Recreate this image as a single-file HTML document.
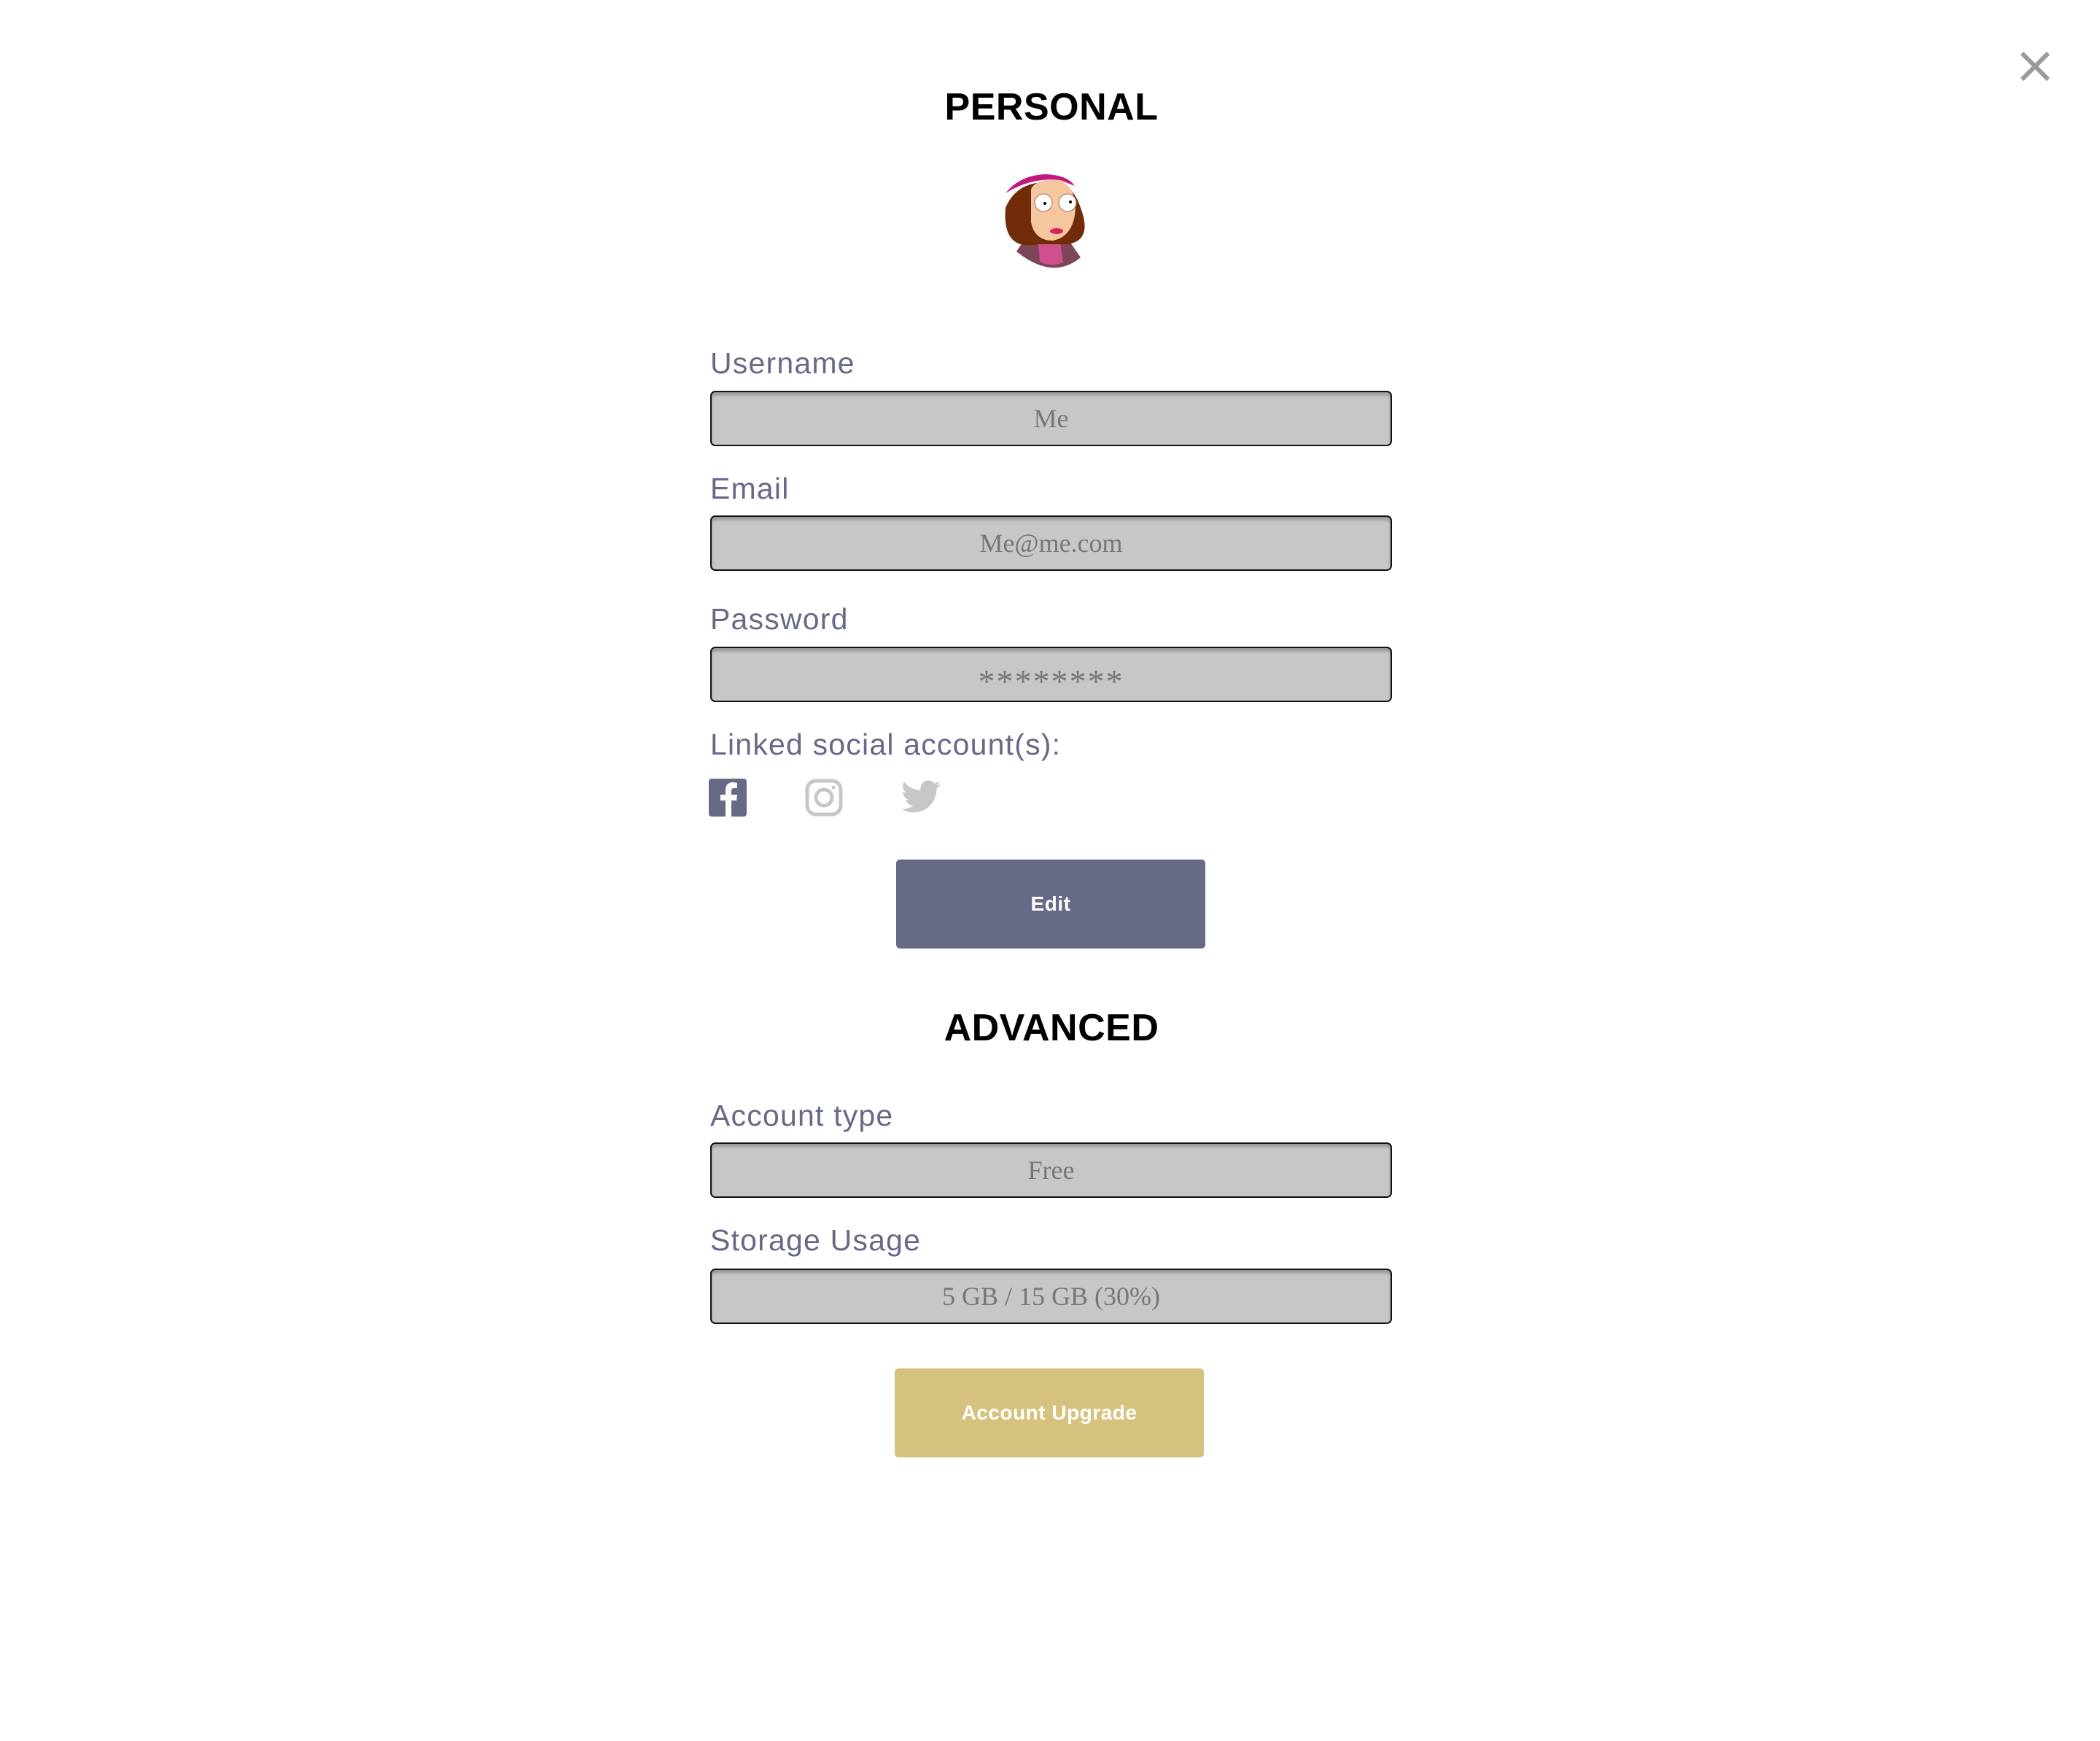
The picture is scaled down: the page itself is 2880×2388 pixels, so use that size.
<!DOCTYPE html>
<html><head><meta charset="utf-8"><style>
html,body{margin:0;padding:0;background:#fff;}
body{width:2880px;height:2388px;position:relative;overflow:hidden;font-family:"Liberation Sans",sans-serif;}
.h{position:absolute;left:0;width:2884px;text-align:center;font-weight:bold;font-size:52px;color:#000;letter-spacing:0.5px;}
.lbl{position:absolute;left:974px;font-size:41px;color:#676a87;line-height:1;letter-spacing:1.2px;}
.in{position:absolute;left:974px;width:931px;height:72px;background:#c7c7c7;border:2px solid #111;border-radius:7px;box-shadow:inset 0 4px 4px rgba(0,0,0,.25);text-align:center;font-family:"Liberation Serif",serif;font-size:36px;color:#777;line-height:72px;}
.btn{position:absolute;color:#fff;font-weight:bold;font-size:28px;text-align:center;border-radius:5px;letter-spacing:0.5px;}
</style></head><body>
<svg style="position:absolute;left:2770px;top:70px" width="42" height="42" viewBox="0 0 42 42"><path d="M3 3L39 39M39 3L3 39" stroke="#9a9a9a" stroke-width="6"/></svg>
<div class="h" style="top:117px">PERSONAL</div>
<svg style="position:absolute;left:1374px;top:235px" width="124" height="140" viewBox="0 0 124 140">
<path d="M20 110 Q70 150 108 118 L92 95 L30 95 Z" fill="#7d4658"/>
<path d="M50 98 L80 98 L84 125 Q68 132 52 124 Z" fill="#d04f8d"/>
<path d="M5 50 Q0 110 50 100 L90 100 Q125 95 108 50 Q95 10 60 15 Q20 15 5 50Z" fill="#722b08"/>
<path d="M40 25 Q45 10 80 12 Q105 25 100 60 Q95 90 70 95 Q45 95 40 70 Z" fill="#f6c69e"/>
<path d="M5 30 Q40 8 80 12 L100 20 Q90 5 60 4 Q25 5 5 30Z" fill="#bf1a7f"/>
<circle cx="57" cy="43" r="12" fill="#fff" stroke="#a07060"/><circle cx="90" cy="43" r="12" fill="#fff" stroke="#a07060"/>
<circle cx="59" cy="44" r="2" fill="#000"/><circle cx="94" cy="42" r="2" fill="#000"/>
<ellipse cx="75" cy="82" rx="9" ry="4" fill="#d4245f"/>
</svg>
<div class="lbl" style="top:478px">Username</div>
<div class="in" style="top:536px">Me</div>
<div class="lbl" style="top:650px">Email</div>
<div class="in" style="top:707px">Me@me.com</div>
<div class="lbl" style="top:829px">Password</div>
<div class="in" style="top:887px;font-size:46px;line-height:92px;letter-spacing:2px">********</div>
<div class="lbl" style="top:1001px">Linked social account(s):</div>
<svg style="position:absolute;left:972px;top:1068px" width="52" height="52" viewBox="0 0 52 52"><rect width="52" height="52" rx="4" fill="#676a87"/><path d="M31 52V30h7l1-8h-8v-5c0-2 1-4 4-4h4V6c-1 0-3-1-6-1-6 0-10 4-10 10v7h-7v8h7v22z" fill="#fff"/></svg>
<svg style="position:absolute;left:1104px;top:1068px" width="52" height="52" viewBox="0 0 52 52"><rect x="3" y="3" width="46" height="46" rx="12" fill="none" stroke="#c7c7c7" stroke-width="5"/><circle cx="26" cy="26" r="11" fill="none" stroke="#c7c7c7" stroke-width="5"/><circle cx="39" cy="12" r="2.5" fill="#c7c7c7"/></svg>
<svg style="position:absolute;left:1236px;top:1070px" width="54" height="46" viewBox="0 0 24 20"><path d="M24 2.4c-.9.4-1.8.7-2.8.8 1-.6 1.8-1.6 2.2-2.7-1 .6-2 1-3.1 1.2C19.3.7 18 0 16.6 0c-2.7 0-4.9 2.2-4.9 4.9 0 .4 0 .8.1 1.1C7.7 5.8 4.1 3.9 1.7.9c-.4.7-.7 1.6-.7 2.5 0 1.7.9 3.2 2.2 4.1-.8 0-1.600-.2-2.2-.6v.1c0 2.4 1.7 4.4 3.9 4.8-.4.1-.8.2-1.3.2-.3 0-.6 0-.9-.1.6 2 2.4 3.4 4.6 3.4-1.7 1.3-3.8 2.1-6.1 2.1-.4 0-.8 0-1.2-.1 2.2 1.4 4.8 2.2 7.5 2.2 9.1 0 14-7.5 14-14v-.6c1-.7 1.8-1.6 2.5-2.5z" fill="#c7c7c7"/></svg>
<div class="btn" style="left:1229px;top:1179px;width:424px;height:122px;line-height:122px;background:#676a87;">Edit</div>
<div class="h" style="top:1380px">ADVANCED</div>
<div class="lbl" style="top:1510px">Account type</div>
<div class="in" style="top:1567px">Free</div>
<div class="lbl" style="top:1681px">Storage Usage</div>
<div class="in" style="top:1740px">5 GB / 15 GB (30%)</div>
<div class="btn" style="left:1227px;top:1877px;width:424px;height:122px;line-height:122px;background:#d6c27f;">Account Upgrade</div>
</body></html>
